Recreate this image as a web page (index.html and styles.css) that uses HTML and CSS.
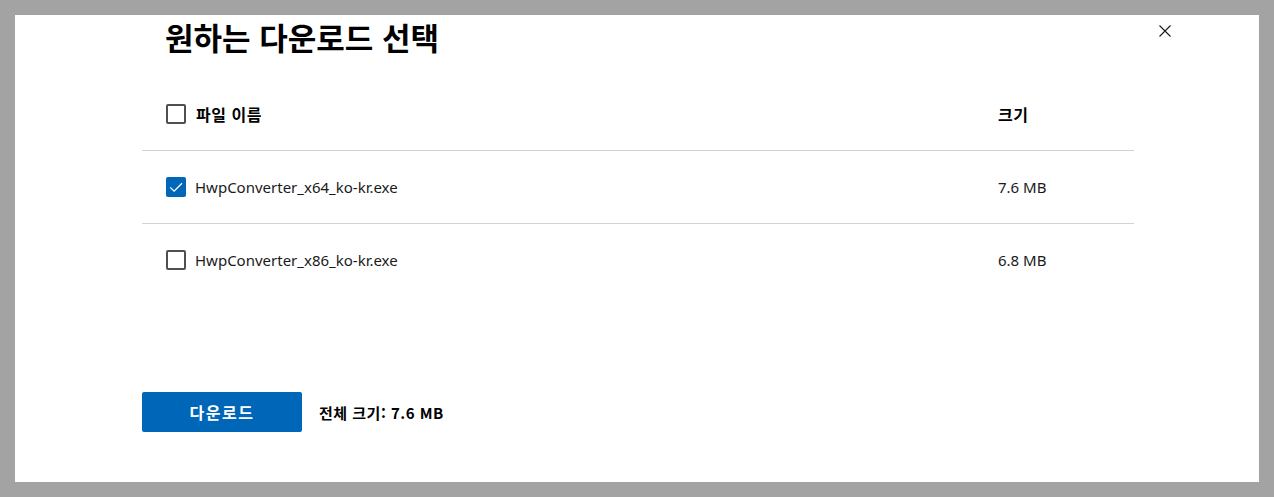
FILE: index.html
```html
<!DOCTYPE html>
<html lang="ko">
<head>
<meta charset="utf-8">
<link rel="stylesheet" href="styles.css">
</head>
<body>
<div class="panel">
  <button class="close" aria-label="닫기">
    <svg width="12" height="12" viewBox="0 0 12 12"><path d="M0.5 0.5 L11.5 11.5 M11.5 0.5 L0.5 11.5" stroke="#1a1a1a" stroke-width="1.1" fill="none"/></svg>
  </button>
  <h1 class="title">원하는 다운로드 선택</h1>
  <div class="table">
    <div class="row head">
      <div class="name"><span class="box"></span><span class="label">파일 이름</span></div>
      <div class="size">크기</div>
    </div>
    <div class="row line">
      <div class="name"><span class="box checked"><svg width="20" height="20" viewBox="0 0 20 20"><path d="M4.2 10.4 L8.1 14.2 L16 6.2" stroke="#fff" stroke-width="1.3" fill="none"/></svg></span><span>HwpConverter_x64_ko-kr.exe</span></div>
      <div class="size">7.6 MB</div>
    </div>
    <div class="row line">
      <div class="name"><span class="box"></span><span>HwpConverter_x86_ko-kr.exe</span></div>
      <div class="size">6.8 MB</div>
    </div>
  </div>
  <div class="footer">
    <button class="download">다운로드</button>
    <span class="total">전체 크기: 7.6 MB</span>
  </div>
</div>
</body>
</html>
```
FILE: styles.css
```css
* { box-sizing: border-box; }
html, body { margin: 0; }
body {
  background: #a3a3a3;
  padding: 15px;
  font-family: "Noto Sans", "Noto Sans CJK KR", sans-serif;
  color: #1a1a1a;
  width: 1274px;
  height: 497px;
  overflow: hidden;
}
.panel {
  position: relative;
  background: #fff;
  width: 1244px;
  height: 467px;
  padding-left: 127px;
}
.close {
  position: absolute;
  top: 10px;
  right: 88px;
  width: 12px;
  height: 12px;
  padding: 0;
  border: 0;
  background: none;
  display: flex;
}
.title {
  margin: 0;
  padding: 2px 0 0 23px;
  height: 62px;
  font-size: 31px;
  line-height: 40px;
  font-weight: 700;
  font-family: "Noto Sans CJK KR", sans-serif;
  color: #000;
}
.table { width: 992px; }
.row {
  display: grid;
  grid-template-columns: 1fr 136px;
  align-items: center;
  height: 73px;
  font-size: 15px;
}
.row.line { border-top: 1px solid #d2d2d2; }
.head {
  font-weight: 700;
  font-family: "Noto Sans CJK KR", sans-serif;
  font-size: 16px;
  letter-spacing: 0.5px;
  color: #000;
}
.name {
  display: flex;
  align-items: center;
  gap: 9px;
  padding-left: 24px;
}
.head .name { gap: 10px; }
.box {
  width: 20px;
  height: 20px;
  border: 2px solid #505050;
  border-radius: 2px;
  flex: none;
  display: flex;
}
.box.checked {
  background: #0067b8;
  border: 0;
}
.footer {
  margin-top: 96px;
  display: flex;
  align-items: center;
  gap: 17px;
}
.download {
  width: 160px;
  height: 40px;
  border: 0;
  border-radius: 2px;
  background: #0067b8;
  color: #fff;
  font-family: "Noto Sans CJK KR", sans-serif;
  font-weight: 700;
  font-size: 16px;
  letter-spacing: 1.5px;
}
.total {
  font-family: "Noto Sans CJK KR", sans-serif;
  font-weight: 700;
  font-size: 15px;
  letter-spacing: 0.5px;
  color: #000;
}
```
